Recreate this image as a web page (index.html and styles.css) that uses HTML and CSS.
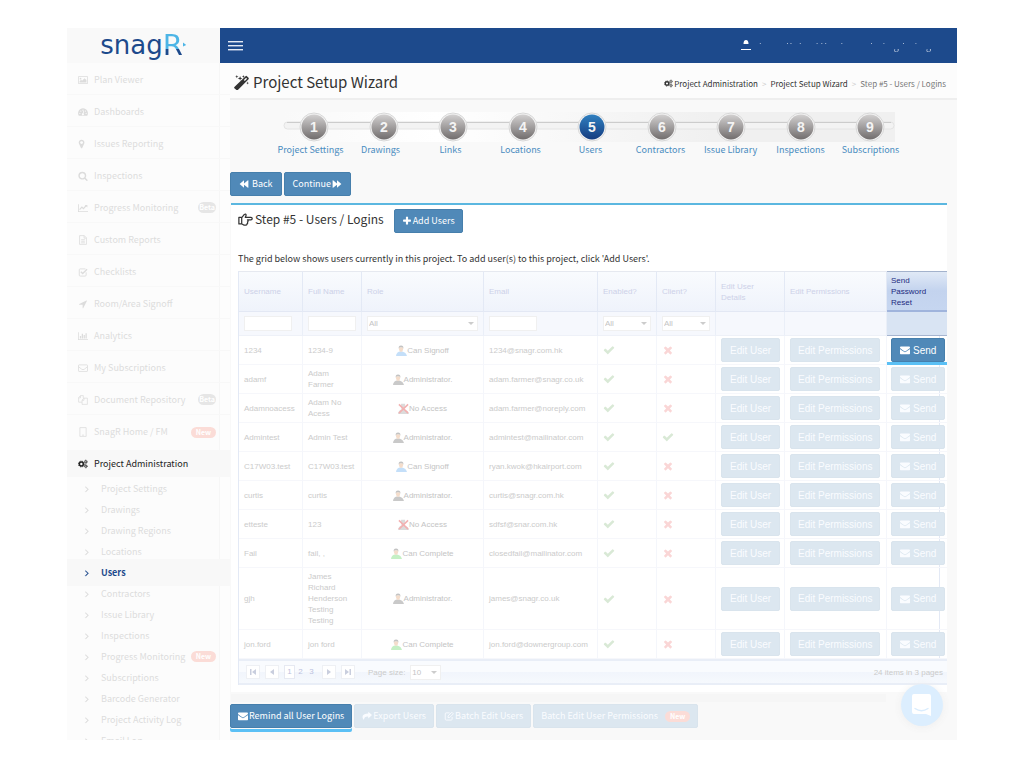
FILE: index.html
```html
<!DOCTYPE html>
<html lang="en">
<head>
  <meta charset="UTF-8" />
  <meta name="viewport" content="width=device-width, initial-scale=1.0"/>
  <title>Project Setup Wizard - Users / Logins</title>
  <link rel="stylesheet" href="styles.css">
</head>
<body>
  <!-- icon set -->
  <svg class="defs" aria-hidden="true">
    <symbol id="i-envelope" viewBox="0 0 1792 1792"><path d="M1792 710v794q0 66-47 113t-113 47h-1472q-66 0-113-47t-47-113v-794q44 49 101 87 362 246 497 345 57 42 92.500 65.500t94.500 48 110 24.500h2q51 0 110-24.500t94.500-48 92.500-65.500q170-123 498-345 57-39 100-87zm0-294q0 79-49 151t-122 123q-376 261-468 325-10 7-42.500 31t-54 38.500-52 32.500-57.500 27-50 9h-2q-23 0-50-9t-57.500-27-52-32.500-54-38.500-42.500-31q-91-64-262-182.500t-205-142.500q-62-42-117-115.500t-55-136.500q0-78 41.500-130t118.500-52h1472q65 0 112.500 47t47.500 113z"/></symbol>
    <symbol id="i-check" viewBox="0 0 1792 1792"><path d="M1671 566q0 40-28 68l-724 724-136 136q-28 28-68 28t-68-28l-136-136-362-362q-28-28-28-68t28-68l136-136q28-28 68-28t68 28l294 295 656-657q28-28 68-28t68 28l136 136q28 28 28 68z"/></symbol>
    <symbol id="i-times" viewBox="0 0 1792 1792"><path d="M1490 1322q0 40-28 68l-136 136q-28 28-68 28t-68-28l-294-294-294 294q-28 28-68 28t-68-28l-136-136q-28-28-28-68t28-68l294-294-294-294q-28-28-28-68t28-68l136-136q28-28 68-28t68 28l294 294 294-294q28-28 68-28t68 28l136 136q28 28 28 68t-28 68l-294 294 294 294q28 28 28 68z"/></symbol>
    <symbol id="i-plus" viewBox="0 0 1792 1792"><path d="M1600 736v192q0 40-28 68t-68 28h-416v416q0 40-28 68t-68 28h-192q-40 0-68-28t-28-68v-416h-416q-40 0-68-28t-28-68v-192q0-40 28-68t68-28h416v-416q0-40 28-68t68-28h192q40 0 68 28t28 68v416h416q40 0 68 28t28 68z"/></symbol>
    <symbol id="i-marker" viewBox="256 0 1792 1792"><path d="M1152 640q0-106-75-181t-181-75-181 75-75 181 75 181 181 75 181-75 75-181zm256 0q0 109-33 179l-364 774q-16 33-47.500 52t-67.500 19-67.500-19-46.500-52l-365-774q-33-70-33-179 0-212 150-362t362-150 362 150 150 362z"/></symbol>
    <symbol id="i-search" viewBox="0 0 1792 1792"><path d="M1216 832q0-185-131.500-316.500t-316.500-131.500-316.500 131.500-131.500 316.500 131.500 316.500 316.500 131.500 316.500-131.500 131.500-316.500zm512 832q0 52-38 90t-90 38q-54 0-90-38l-343-342q-179 124-399 124-143 0-273.500-55.500t-225-150-150-225-55.500-273.500 55.500-273.500 150-225 225-150 273.500-55.500 273.500 55.500 225 150 150 225 55.500 273.500q0 220-124 399l343 343q37 37 37 90z"/></symbol>
    <symbol id="i-arrow" viewBox="0 0 1792 1792"><path d="M1593 349l-640 1280q-17 35-57 35-5 0-15-2-22-5-35.500-22.500t-13.500-39.500v-576h-576q-22 0-39.500-13.500t-22.500-35.500 4-42 29-30l1280-640q13-7 29-7 27 0 45 19 15 14 18.500 34.500t-6.500 39.500z"/></symbol>
    <symbol id="i-angle" viewBox="0 0 1792 1792"><path d="M1171 960q0 13-10 23l-466 466q-10 10-23 10t-23-10l-50-50q-10-10-10-23t10-23l393-393-393-393q-10-10-10-23t10-23l50-50q10-10 23-10t23 10l466 466q10 10 10 23z" stroke="currentColor" stroke-width="60"/></symbol>
    <symbol id="i-image" viewBox="0 0 16 16"><path fill-rule="evenodd" d="M1 2h14a1 1 0 0 1 1 1v10a1 1 0 0 1-1 1H1a1 1 0 0 1-1-1V3a1 1 0 0 1 1-1zm.2 1.200v9.600h13.600V3.200zM2.500 12V10l2.500-2.500L6.500 9l4-4 3 3v4z"/><circle cx="4" cy="5.800" r="1.400"/></symbol>
    <symbol id="i-dash" viewBox="0 0 16 16"><path fill-rule="evenodd" d="M8 2a8 8 0 0 1 6.800 12H1.200A8 8 0 0 1 8 2zM3 9a1 1 0 1 0 0 2 1 1 0 0 0 0-2zm1.500-3.500a1 1 0 1 0 0 2 1 1 0 0 0 0-2zM8 4a1 1 0 1 0 0 2 1 1 0 0 0 0-2zm3.800 1.500a1 1 0 1 0 0 2 1 1 0 0 0 0-2zM13 9a1 1 0 1 0 0 2 1 1 0 0 0 0-2zM8.600 6.500L7.600 10a1.600 1.600 0 1 0 1.200.3l1-3.500z"/></symbol>
    <symbol id="i-line" viewBox="0 0 16 16"><path d="M0 2h1.300v11H16v1.300H0z"/><path d="M2.500 10.500l3.700-4 2.500 2.500 4.500-5" fill="none" stroke="currentColor" stroke-width="1.800"/><path d="M10.800 3H15v4.200z"/></symbol>
    <symbol id="i-file" viewBox="0 0 16 16"><path fill="none" stroke="currentColor" stroke-width="1.300" d="M2.500 1h7.500l3.500 3.500V15h-11zM9.700 1v4h3.800M5 7.500h6M5 10h6M5 12.500h6"/></symbol>
    <symbol id="i-checkbox" viewBox="0 0 16 16"><path fill="none" stroke="currentColor" stroke-width="1.400" d="M13 8.500V13a1.500 1.500 0 0 1-1.500 1.500h-8A1.500 1.500 0 0 1 2 13V4.500A1.500 1.500 0 0 1 3.500 3H12"/><path fill="none" stroke="currentColor" stroke-width="2.200" d="M4.500 7.500l3 3 7-7"/></symbol>
    <symbol id="i-bars" viewBox="0 0 16 16"><path d="M0 2h1.200v11H16v1.200H0zM3 8h2v4H3zM6 4.500h2V12H6zM9 6.500h2V12H9zM12 3.500h2V12h-2z"/></symbol>
    <symbol id="i-mail-o" viewBox="0 0 16 16"><path fill="none" stroke="currentColor" stroke-width="1.300" d="M1.800 3h12.400a1 1 0 0 1 1 1v8.500a1 1 0 0 1-1 1H1.800a1 1 0 0 1-1-1V4a1 1 0 0 1 1-1zM1 6l5 4q2 1.300 4 0l5-4"/></symbol>
    <symbol id="i-copy" viewBox="0 0 16 16"><path fill="none" stroke="currentColor" stroke-width="1.200" d="M4 1h4.500v4M4 1L1 4v7.500h5.500M4 1v3.500H1M9.500 5H15v10H6.500V8zM9.500 5v3.500h-3"/></symbol>
    <symbol id="i-building" viewBox="0 0 16 16"><path fill="none" stroke="currentColor" stroke-width="1.300" d="M3 1h10v14H3zM6.500 13h3"/></symbol>
    <symbol id="i-cogs" viewBox="0 0 18 16"><g fill="none" stroke="currentColor"><circle cx="6" cy="8" r="3.500" stroke-width="2.700"/><circle cx="6" cy="8" r="5.200" stroke-width="1.800" stroke-dasharray="2.100 1.984"/><circle cx="14" cy="4" r="1.800" stroke-width="1.400"/><circle cx="14" cy="4" r="2.900" stroke-width="1.300" stroke-dasharray="1.300 .977"/><circle cx="14" cy="12" r="1.800" stroke-width="1.400"/><circle cx="14" cy="12" r="2.900" stroke-width="1.300" stroke-dasharray="1.300 .977"/></g></symbol>
    <symbol id="i-wand" viewBox="0 0 16 16"><path fill-rule="evenodd" d="M.4 12.800L12.300 1.200q.8-.6 1.500 0l1.700 1.700q.6.700 0 1.500L4.100 16q-.8.500-1.500 0L.4 14.200q-.5-.7 0-1.400zM10.500 5.400l1 1 2.400-2.400-1-1z"/><path d="M3 0l.5 1.300 1.300.4-1.300.5L3 3.500l-.5-1.300-1.300-.5 1.300-.4zM6.500 1l.6 2 2 .6-2 .6-.6 2-.6-2-2-.6 2-.6zM10 0l.5 1.200 1.100.4-1.100.4L10 3.200l-.4-1.200-1.200-.4 1.200-.4zM14.500 7l.4 1.200 1.100.4-1.100.4-.4 1.200-.4-1.200-1.100-.4 1.100-.4z"/></symbol>
    <symbol id="i-hand" viewBox="0 0 17 16"><path fill="none" stroke="currentColor" stroke-width="1.400" stroke-linejoin="round" d="M1 5.500h3.500L7.200 2.300q1.800-1 2 .7 0 1-1 2.500h6.500a1.300 1.300 0 0 1 0 2.800h-4q1.600 1.500 0 2.500.8 1.300-.5 2 .2 1.400-1.200 1.500H6.500L4.500 13H1zM4.200 5.500V13"/></symbol>
    <symbol id="i-back" viewBox="0 0 16 16"><path d="M8 2v5l6.300-5q.7-.3.700.5v11q0 .8-.7.500L8 9v5L1 8z"/></symbol>
    <symbol id="i-share" viewBox="0 0 16 16"><path d="M16 6.500L10 12V9Q3.500 8.500 3 14.500 0 11 1 8q1.500-4 9-4V1z"/></symbol>
    <symbol id="i-edit" viewBox="0 0 16 16"><path fill="none" stroke="currentColor" stroke-width="1.400" d="M13 9.500V13a1.500 1.500 0 0 1-1.500 1.500h-8A1.500 1.500 0 0 1 2 13V4.500A1.500 1.500 0 0 1 3.500 3H9"/><path fill="none" stroke="currentColor" stroke-width="1.400" d="M6.500 8l6-6L15 4.500l-6 6H6.500z"/></symbol>
    <symbol id="i-person" viewBox="0 0 12 12"><path d="M0 12Q.5 7.500 4 7h3Q11 8 12 12z"/><path fill="#e0a070" d="M3.300 2.500h4.400V5Q7.500 7.500 5.500 7.700 3.500 7.500 3.300 5z"/><path fill="#555" d="M3 4Q2.500.5 5.500.5T8 4L7 2.500H4z"/></symbol>
    <symbol id="i-noaccess" viewBox="0 0 12 12"><path fill="#999" d="M0 12Q.5 7.500 4 7h3Q11 8 12 12zM3.300.8h4.400V5Q7.500 7.500 5.500 7.700 3.500 7.500 3.300 5z"/><path fill="none" stroke="#d22" stroke-width="1.700" d="M1 1.500l10 9.500M11 1.500L1 11"/></symbol>
  </svg>

  <div class="app">
    <header class="topbar">
      <a class="logo" href="#" aria-label="snagR"><span class="snag">snag</span><span class="r">R</span><svg width="4" height="8" viewBox="0 0 5 8"><path d="M0 1l4 3-4 2z" fill="#4db5e6"/></svg></a>
      <nav class="navbar">
        <button class="menu-toggle" aria-label="Toggle menu"><span></span><span></span><span></span></button>
        <a class="account" href="#">
          <svg width="10" height="12" viewBox="0 0 10 12"><path d="M2.500 4Q2.500 0 5 0t2.500 4zM0 9h10v1H0z" fill="#fff"/></svg>
          <span>James Richard Henderson Testing Testing</span>
        </a>
      </nav>
    </header>

    <div class="body">
      <aside class="sidebar">
        <ul class="menu">
          <li><a href="#"><svg class="ico"><use href="#i-image"/></svg>Plan Viewer</a></li>
          <li><a href="#"><svg class="ico"><use href="#i-dash"/></svg>Dashboards</a></li>
          <li><a href="#"><svg class="ico"><use href="#i-marker"/></svg>Issues Reporting</a></li>
          <li><a href="#"><svg class="ico"><use href="#i-search"/></svg>Inspections</a></li>
          <li><a href="#"><svg class="ico"><use href="#i-line"/></svg>Progress Monitoring<span class="badge">Beta</span></a></li>
          <li><a href="#"><svg class="ico"><use href="#i-file"/></svg>Custom Reports</a></li>
          <li><a href="#"><svg class="ico"><use href="#i-checkbox"/></svg>Checklists</a></li>
          <li><a href="#"><svg class="ico"><use href="#i-arrow"/></svg>Room/Area Signoff</a></li>
          <li><a href="#"><svg class="ico"><use href="#i-bars"/></svg>Analytics</a></li>
          <li><a href="#"><svg class="ico"><use href="#i-mail-o"/></svg>My Subscriptions</a></li>
          <li><a href="#"><svg class="ico"><use href="#i-copy"/></svg>Document Repository<span class="badge">Beta</span></a></li>
          <li><a href="#"><svg class="ico"><use href="#i-building"/></svg>SnagR Home / FM<span class="badge new">New</span></a></li>
          <li class="open"><a href="#"><svg class="ico"><use href="#i-cogs"/></svg>Project Administration</a></li>
        </ul>
        <ul class="submenu">
          <li><a href="#"><svg class="ico"><use href="#i-angle"/></svg>Project Settings</a></li>
          <li><a href="#"><svg class="ico"><use href="#i-angle"/></svg>Drawings</a></li>
          <li><a href="#"><svg class="ico"><use href="#i-angle"/></svg>Drawing Regions</a></li>
          <li><a href="#"><svg class="ico"><use href="#i-angle"/></svg>Locations</a></li>
          <li class="current"><a href="#"><svg class="ico"><use href="#i-angle"/></svg>Users</a></li>
          <li><a href="#"><svg class="ico"><use href="#i-angle"/></svg>Contractors</a></li>
          <li><a href="#"><svg class="ico"><use href="#i-angle"/></svg>Issue Library</a></li>
          <li><a href="#"><svg class="ico"><use href="#i-angle"/></svg>Inspections</a></li>
          <li><a href="#"><svg class="ico"><use href="#i-angle"/></svg><span class="name">Progress Monitoring</span><span class="badge new">New</span></a></li>
          <li><a href="#"><svg class="ico"><use href="#i-angle"/></svg>Subscriptions</a></li>
          <li><a href="#"><svg class="ico"><use href="#i-angle"/></svg>Barcode Generator</a></li>
          <li><a href="#"><svg class="ico"><use href="#i-angle"/></svg>Project Activity Log</a></li>
          <li><a href="#"><svg class="ico"><use href="#i-angle"/></svg>Email Log</a></li>
        </ul>
      </aside>

      <main class="content">
        <div class="page-head">
          <h1><svg class="ico-lg"><use href="#i-wand"/></svg>Project Setup Wizard</h1>
          <ol class="crumbs">
            <li><a href="#"><svg class="ico-sm"><use href="#i-cogs"/></svg>Project Administration</a></li>
            <li><a href="#">Project Setup Wizard</a></li>
            <li class="here">Step #5 - Users / Logins</li>
          </ol>
        </div>

        <div class="wizard">
          <svg class="track" viewBox="0 0 612 30" aria-hidden="true">
            <defs>
              <linearGradient id="grey" x1="0" y1="0" x2="0" y2="1"><stop offset="0" stop-color="#d2d0d0"/><stop offset="1" stop-color="#716d6d"/></linearGradient>
              <linearGradient id="blue" x1="0" y1="0" x2="0" y2="1"><stop offset="0" stop-color="#3080c0"/><stop offset="1" stop-color="#153c80"/></linearGradient>
              <linearGradient id="shade"><stop offset="0" stop-color="#f9f9f9"/><stop offset=".25" stop-color="#fff"/><stop offset=".7" stop-color="#f0f0f0"/><stop offset="1" stop-color="#f0f0f0"/></linearGradient>
            </defs>
            <rect width="612" height="30" fill="url(#shade)"/>
            <rect x="1" y="10" width="610" height="7" rx="3.500" fill="#f3f3f3" stroke="#e4e4e4"/>
            <path d="M4 10.500h604" stroke="#ccc"/>
            <g fill="#f4f4f4" stroke="#d8d8d8">
              <circle cx="31" cy="15" r="14"/><circle cx="101" cy="15" r="14"/><circle cx="170" cy="15" r="14"/><circle cx="240" cy="15" r="14"/><circle cx="309" cy="15" r="14"/><circle cx="379" cy="15" r="14"/><circle cx="448" cy="15" r="14"/><circle cx="518" cy="15" r="14"/><circle cx="587" cy="15" r="14"/>
            </g>
            <g fill="url(#grey)">
              <circle cx="31" cy="15" r="12.500"/><circle cx="101" cy="15" r="12.500"/><circle cx="170" cy="15" r="12.500"/><circle cx="240" cy="15" r="12.500"/><circle cx="309" cy="15" r="12.500" fill="url(#blue)"/><circle cx="379" cy="15" r="12.500"/><circle cx="448" cy="15" r="12.500"/><circle cx="518" cy="15" r="12.500"/><circle cx="587" cy="15" r="12.500"/>
            </g>
            <g class="nums">
              <text x="31" y="20">1</text><text x="101" y="20">2</text><text x="170" y="20">3</text><text x="240" y="20">4</text><text x="309" y="20">5</text><text x="379" y="20">6</text><text x="448" y="20">7</text><text x="518" y="20">8</text><text x="587" y="20">9</text>
            </g>
          </svg>
          <div class="steps">
            <a href="#">Project Settings</a><a href="#">Drawings</a><a href="#">Links</a><a href="#">Locations</a><a href="#">Users</a><a href="#">Contractors</a><a href="#">Issue Library</a><a href="#">Inspections</a><a href="#">Subscriptions</a>
          </div>
        </div>

        <div class="btn-row nav-row">
          <button class="btn"><svg class="ico"><use href="#i-back"/></svg>&nbsp;Back</button>
          <button class="btn">Continue<svg class="ico flip"><use href="#i-back"/></svg></button>
        </div>

        <section class="card">
          <div class="card-head">
            <h2><svg class="ico-lg"><use href="#i-hand"/></svg>Step #5 - Users / Logins</h2>
            <button class="btn"><svg class="ico"><use href="#i-plus"/></svg>Add Users</button>
          </div>
          <p>The grid below shows users currently in this project. To add user(s) to this project, click 'Add Users'.</p>

          <div class="grid-wrap">
            <table class="grid">
              <colgroup><col class="c-user"><col class="c-flag"><col class="c-role"><col class="c-email"><col class="c-flag"><col class="c-flag"><col class="c-edit"><col class="c-perm"><col></colgroup>
              <thead>
                <tr><th>Username</th><th>Full Name</th><th>Role</th><th>Email</th><th>Enabled?</th><th>Client?</th><th>Edit User<br>Details</th><th>Edit Permissions</th><th class="hot">Send<br>Password<br>Reset</th></tr>
                <tr class="filters">
                  <td><input type="text" aria-label="Filter username"></td>
                  <td><input type="text" aria-label="Filter full name"></td>
                  <td><div class="pick"><select aria-label="Filter role"><option>All</option></select></div></td>
                  <td><input type="text" aria-label="Filter email"></td>
                  <td><div class="pick"><select aria-label="Filter enabled"><option>All</option></select></div></td>
                  <td><div class="pick"><select aria-label="Filter client"><option>All</option></select></div></td>
                  <td></td><td></td><td class="hot"></td>
                </tr>
              </thead>
              <tbody>
                <tr><td>1234</td><td>1234-9</td><td class="role signoff"><svg><use href="#i-person"/></svg>Can Signoff</td><td>1234@snagr.com.hk</td><td><svg class="yes"><use href="#i-check"/></svg></td><td><svg class="no"><use href="#i-times"/></svg></td><td><button class="btn">Edit User</button></td><td><button class="btn">Edit Permissions</button></td><td class="hot-cell"><button class="btn on"><svg class="ico"><use href="#i-envelope"/></svg>Send</button></td></tr>
                <tr><td>adamf</td><td>Adam<br>Farmer</td><td class="role"><svg><use href="#i-person"/></svg>Administrator.</td><td>adam.farmer@snagr.co.uk</td><td><svg class="yes"><use href="#i-check"/></svg></td><td><svg class="no"><use href="#i-times"/></svg></td><td><button class="btn">Edit User</button></td><td><button class="btn">Edit Permissions</button></td><td><button class="btn"><svg class="ico"><use href="#i-envelope"/></svg>Send</button></td></tr>
                <tr><td>Adamnoacess</td><td>Adam No<br>Acess</td><td class="role"><svg><use href="#i-noaccess"/></svg>No Access</td><td>adam.farmer@noreply.com</td><td><svg class="yes"><use href="#i-check"/></svg></td><td><svg class="no"><use href="#i-times"/></svg></td><td><button class="btn">Edit User</button></td><td><button class="btn">Edit Permissions</button></td><td><button class="btn"><svg class="ico"><use href="#i-envelope"/></svg>Send</button></td></tr>
                <tr><td>Admintest</td><td>Admin Test</td><td class="role"><svg><use href="#i-person"/></svg>Administrator.</td><td>admintest@mailinator.com</td><td><svg class="yes"><use href="#i-check"/></svg></td><td><svg class="yes"><use href="#i-check"/></svg></td><td><button class="btn">Edit User</button></td><td><button class="btn">Edit Permissions</button></td><td><button class="btn"><svg class="ico"><use href="#i-envelope"/></svg>Send</button></td></tr>
                <tr><td>C17W03.test</td><td>C17W03.test</td><td class="role signoff"><svg><use href="#i-person"/></svg>Can Signoff</td><td>ryan.kwok@hkairport.com</td><td><svg class="yes"><use href="#i-check"/></svg></td><td><svg class="no"><use href="#i-times"/></svg></td><td><button class="btn">Edit User</button></td><td><button class="btn">Edit Permissions</button></td><td><button class="btn"><svg class="ico"><use href="#i-envelope"/></svg>Send</button></td></tr>
                <tr><td>curtis</td><td>curtis</td><td class="role"><svg><use href="#i-person"/></svg>Administrator.</td><td>curtis@snagr.com.hk</td><td><svg class="yes"><use href="#i-check"/></svg></td><td><svg class="no"><use href="#i-times"/></svg></td><td><button class="btn">Edit User</button></td><td><button class="btn">Edit Permissions</button></td><td><button class="btn"><svg class="ico"><use href="#i-envelope"/></svg>Send</button></td></tr>
                <tr><td>etteste</td><td>123</td><td class="role"><svg><use href="#i-noaccess"/></svg>No Access</td><td>sdfsf@snar.com.hk</td><td><svg class="yes"><use href="#i-check"/></svg></td><td><svg class="no"><use href="#i-times"/></svg></td><td><button class="btn">Edit User</button></td><td><button class="btn">Edit Permissions</button></td><td><button class="btn"><svg class="ico"><use href="#i-envelope"/></svg>Send</button></td></tr>
                <tr><td>Fail</td><td>fail, ,</td><td class="role complete"><svg><use href="#i-person"/></svg>Can Complete</td><td>closedfail@mailinator.com</td><td><svg class="yes"><use href="#i-check"/></svg></td><td><svg class="no"><use href="#i-times"/></svg></td><td><button class="btn">Edit User</button></td><td><button class="btn">Edit Permissions</button></td><td><button class="btn"><svg class="ico"><use href="#i-envelope"/></svg>Send</button></td></tr>
                <tr><td>gjh</td><td>James<br>Richard<br>Henderson<br>Testing<br>Testing</td><td class="role"><svg><use href="#i-person"/></svg>Administrator.</td><td>james@snagr.co.uk</td><td><svg class="yes"><use href="#i-check"/></svg></td><td><svg class="no"><use href="#i-times"/></svg></td><td><button class="btn">Edit User</button></td><td><button class="btn">Edit Permissions</button></td><td><button class="btn"><svg class="ico"><use href="#i-envelope"/></svg>Send</button></td></tr>
                <tr><td>jon.ford</td><td>jon ford</td><td class="role complete"><svg><use href="#i-person"/></svg>Can Complete</td><td>jon.ford@downergroup.com</td><td><svg class="yes"><use href="#i-check"/></svg></td><td><svg class="no"><use href="#i-times"/></svg></td><td><button class="btn">Edit User</button></td><td><button class="btn">Edit Permissions</button></td><td><button class="btn"><svg class="ico"><use href="#i-envelope"/></svg>Send</button></td></tr>
              </tbody>
            </table>
            <div class="pager">
              <button aria-label="First page"><svg viewBox="0 0 8 8"><path d="M1 1h1.500v6H1zM7 1v6L3 4z"/></svg></button>
              <button aria-label="Previous page"><svg viewBox="0 0 8 8"><path d="M6 1v6L2 4z"/></svg></button>
              <span class="pages"><a class="cur" href="#">1</a><a href="#">2</a><a href="#">3</a></span>
              <button aria-label="Next page"><svg viewBox="0 0 8 8"><path d="M2 1v6l4-3z"/></svg></button>
              <button aria-label="Last page"><svg viewBox="0 0 8 8"><path d="M5.500 1H7v6H5.500zM1 1v6l4-3z"/></svg></button>
              <label for="page-size">Page size:</label>
              <div class="pick"><select id="page-size"><option>10</option></select></div>
              <span class="total">24 items in 3 pages</span>
            </div>
          </div>
        </section>

        <div class="scroller"></div>
        <div class="btn-row actions">
          <button class="btn on"><svg class="ico"><use href="#i-envelope"/></svg>Remind all User Logins</button>
          <button class="btn"><svg class="ico"><use href="#i-share"/></svg>Export Users</button>
          <button class="btn"><svg class="ico"><use href="#i-edit"/></svg>Batch Edit Users</button>
          <button class="btn">Batch Edit User Permissions<span class="badge new">New</span></button>
        </div>
      </main>
    </div>

    <button class="chat" aria-label="Open chat"><svg width="22" height="24" viewBox="0 0 22 24"><path d="M3 1h15a2 2 0 0 1 2 2v20l-5-2H3a2 2 0 0 1-2-2V3a2 2 0 0 1 2-2z" fill="#fff"/><path d="M4 15.500q6.500 4.500 13 0" fill="none" stroke="#d9ecfd" stroke-width="1.400" stroke-linecap="round"/></svg></button>
  </div>
</body>
</html>
```

FILE: styles.css
```css
* { box-sizing: border-box; }
body {
  margin: 0;
  padding: 28px 67px;
  background: #fff;
  color: #333;
  font-family: "Noto Sans CJK SC", "Open Sans", sans-serif;
  font-size: 9px;
  line-height: 12px;
}
a { color: inherit; text-decoration: none; }
ul, ol { list-style: none; margin: 0; padding: 0; }
h1, h2, p { margin: 0; font-weight: 400; }
button, select, input { font: inherit; color: inherit; margin: 0; }
button { cursor: pointer; }
.defs { display: none; }
svg { fill: currentColor; flex: none; }
.ico { width: 10px; height: 10px; }
.ico-sm { width: 9px; height: 9px; }
.ico-lg { width: 15px; height: 15px; }
.flip { transform: scaleX(-1); }

.app {
  position: relative;
  display: flex;
  flex-direction: column;
  height: calc(100vh - 56px);
  overflow: hidden;
  background: #fcfcfc;
}

/* top bar */
.topbar { display: flex; height: 35px; flex: none; }
.logo {
  width: 153px;
  display: flex;
  justify-content: center;
  align-items: center;
  padding-bottom: 2px;
  background: #f9f9f9;
  font-family: "DejaVu Sans", sans-serif;
  font-size: 26px;
  line-height: 32px;
  color: #1d4a8c;
}
.logo .r {
  font-size: 29px;
  color: transparent;
  background: linear-gradient(#4db5e6 62%, #1d4a8c 62%);
  background-clip: text;
  -webkit-background-clip: text;
}
.navbar {
  flex: 1;
  display: flex;
  justify-content: space-between;
  align-items: center;
  padding: 0 26px 0 8px;
  background: #1d4a8c;
}
.menu-toggle {
  display: flex;
  flex-direction: column;
  gap: 3px;
  width: 15px;
  padding: 0;
  border: 0;
  background: none;
}
.menu-toggle span { height: 1px; background: #e4eaf3; box-shadow: 0 1px 0 #6f8bb8; }
.account { display: flex; align-items: center; gap: 6px; }
.account span {
  color: transparent;
  background: linear-gradient(transparent 3px, #c4d0e2 3px, #c4d0e2 4px, transparent 4px, transparent 9px, #c4d0e2 9px);
  background-clip: text;
  -webkit-background-clip: text;
}

/* sidebar */
.body { display: flex; flex: 1; min-height: 0; }
.sidebar {
  width: 163px;
  flex: none;
  background: linear-gradient(to right, #fcfcfc 152px, #f6f6f6 152px, #f6f6f6 153px, #fdfdfd 153px);
  color: #dcdcdc;
  white-space: nowrap;
}
.menu a, .submenu a { display: flex; align-items: center; gap: 6px; }
.menu a { height: 32px; padding: 2px 0 0 11px; border-bottom: 1px solid #f8f8f8; }
.menu li:nth-last-child(2) a { border-bottom: 0; }
.menu .open { margin-top: 3px; background: #f8f8f8; color: #222; }
.menu .open a { height: 27px; padding-top: 0; border: 0; }
.submenu { padding-top: 1px; }
.submenu a { height: 21px; padding-left: 15px; gap: 9px; }
.submenu .name { margin-right: -9px; }
.submenu .current { background: #f8f8f8; color: #1d4a8c; font-weight: 700; margin: -3px 0; padding: 3px 0; }
.badge {
  margin-left: auto;
  margin-right: 14px;
  padding: 0 1px;
  border-radius: 6px;
  background: #e6e6e6;
  color: #fff;
  font-size: 7px;
  font-weight: 700;
  line-height: 11px;
}
.badge.new { padding: 0 5px; background: #fbdcd7; }

/* page heading */
.content { flex: 1; min-width: 0; background: #f9f9f9; }
.page-head {
  display: flex;
  justify-content: space-between;
  align-items: center;
  height: 37px;
  padding: 3px 11px 0 4px;
  background: #fcfcfc;
  border-bottom: 2px solid #eee;
}
h1 { display: flex; align-items: center; gap: 4px; font-size: 15px; line-height: 20px; }
.crumbs { display: flex; font-size: 8px; padding-top: 3px; }
.crumbs a { display: flex; align-items: center; gap: 1px; }
.crumbs li { display: flex; }
.crumbs li + li::before { content: ">"; color: #ccc; padding: 0 4px; }
.crumbs .here { color: #777; }

/* wizard steps */
.wizard { display: flex; flex-direction: column; align-items: center; padding: 12px 6px 0 0; }
.track { width: 612px; height: 30px; margin-right: 4px; }
.nums { font: bold 14px "Liberation Sans", Arial, sans-serif; fill: #f4f4f4; text-anchor: middle; }
.steps { display: grid; grid-template-columns: repeat(9, 70px); padding-top: 2px; text-align: center; color: #4a8cc0; }

.btn {
  display: inline-flex;
  align-items: center;
  justify-content: center;
  gap: 1px;
  height: 24px;
  padding: 0 7px;
  border: 1px solid #467fac;
  border-radius: 2px;
  background: #5089b8;
  color: #fff;
  white-space: nowrap;
}
.btn-row { display: flex; gap: 2px; }
.nav-row { padding-top: 16px; }
.nav-row .btn { padding: 0 8px; }

/* card */
.card {
  margin: 7px 10px 0 1px;
  padding: 4px 0 7px 7px;
  background: #fff;
  border-top: 2px solid #5bb7e0;
}
.card-head { display: flex; gap: 10px; }
h2 { display: flex; align-items: center; gap: 2px; font-size: 12px; line-height: 20px; height: 20px; }
.card p { padding: 20px 0 6px; }

.grid-wrap {
  font-family: "Liberation Sans", Arial, sans-serif;
  font-size: 8px;
  line-height: 11px;
  color: #cbcbcb;
  border-left: 1px solid #e3e9f5;
  background: linear-gradient(#e3e9f5, #e3e9f5) right 7px top / 1px 100% no-repeat;
}
.grid { width: 100%; table-layout: fixed; border-collapse: separate; border-spacing: 0; }
.c-user { width: 64px; }
.c-flag { width: 59px; }
.c-role { width: 122px; }
.c-email { width: 114px; }
.c-edit { width: 69px; }
.c-perm { width: 102px; }
.grid th, .grid td { padding: 0 0 0 5px; text-align: left; vertical-align: middle; border-right: 1px solid #f4f6fb; }
.grid th:last-child, .grid td:last-child { border-right: 0; padding-left: 4px; }
.grid th {
  height: 41px;
  font-weight: 400;
  color: #cdd1e8;
  background: linear-gradient(#f9fbfe, #eff3fb);
  border-top: 1px solid #e6e9f0;
  border-bottom: 1px solid #e3e8f4;
  border-right-color: #e3e9f5;
}
.grid .filters td { height: 24px; background: #f6f8fd; border-bottom: 1px solid #eef1f8; border-right-color: #eaeff8; }
.grid th.hot { color: #1d2b80; background: linear-gradient(#e0e9f6, #c3d3ee 50%, #c6d6f0); border-top-color: #a3b2cc; border-bottom: 2px solid #a0b4dc; }
.grid .filters td.hot { background: #d9e4f3; border-bottom-color: #a6b5d0; }
.grid tbody td { height: 29px; border-bottom: 1px solid #f6f7fb; }
.grid tbody tr:nth-child(9) td { height: 62px; }
.grid input, .pick {
  display: block;
  height: 15px;
  border: 1px solid #f0f0f0;
  background: #fff;
}
.grid input { width: 48px; }
.pick { position: relative; margin-right: 5px; }
.pick select { width: 100%; height: 13px; padding: 0 1px; border: 0; background: none; appearance: none; color: #c4c4c4; display: block; }
.pick::after {
  content: "";
  position: absolute;
  right: 3px;
  top: 5px;
  border: 3px solid transparent;
  border-top-color: #ccc;
  border-bottom: 0;
  pointer-events: none;
}
.grid .role { text-align: center; padding: 0; color: #c4c4c4; }
.role svg { width: 11px; height: 11px; vertical-align: -3px; opacity: .35; color: #666; }
.role.signoff svg { color: #58a6f0; }
.role.complete svg { color: #5cd65c; }
.yes, .no { display: block; width: 12px; height: 12px; }
.yes { color: #d9e9d6; }
.no { color: #fad6d6; }
.grid .btn, .actions .btn { background: #dce7f0; border-color: #d9e4ed; color: #fafcff; }
.grid .btn { display: flex; font-size: 10px; height: 24px; padding: 0 8px; }
.grid td:last-child .btn { gap: 3px; padding: 0 8px; }
.grid td:nth-child(8) .btn { padding: 0 7px; }
.grid .btn.on, .actions .btn.on { background: #5089b8; border-color: #467fac; color: #fff; }
.grid .hot-cell { border-bottom: 3px solid #5bc0f5; padding-top: 2px; }

.pager {
  display: flex;
  align-items: center;
  gap: 5px;
  height: 26px;
  padding: 0 4px 0 7px;
  background: linear-gradient(#f9fbfe 50%, #f1f5fc 50%, #f6f9fd);
  border-top: 2px solid #e9eef7;
  border-bottom: 2px solid #e9eef7;
}
.pager button { width: 14px; height: 14px; padding: 2px; border: 1px solid #eef0f4; background: #fff; color: #c9cede; display: flex; }
.pager button svg { width: 8px; height: 8px; }
.pages { display: flex; color: #bcc2de; }
.pages a { width: 11px; text-align: center; line-height: 14px; }
.pages .cur { background: #fff; border: 1px solid #e6e9f2; line-height: 12px; }
.pager label { margin-left: 8px; }
.pager .pick { width: 31px; margin: 0; }
.total { margin-left: auto; }

.scroller { height: 8px; width: 655px; margin: 2px 0 2px 1px; background: #f6f6f6; }
.actions .badge.new { margin: 0 0 0 6px; }
.actions .btn.on { box-shadow: 0 1px 0 #f9f9f9, 0 4px 0 #5bc0f5; }

.chat {
  position: absolute;
  right: 14px;
  bottom: 14px;
  width: 42px;
  height: 42px;
  display: flex;
  align-items: center;
  justify-content: center;
  padding: 0;
  border: 0;
  border-radius: 50%;
  background: #dceefe;
  box-shadow: 0 1px 8px #eee;
}
```
